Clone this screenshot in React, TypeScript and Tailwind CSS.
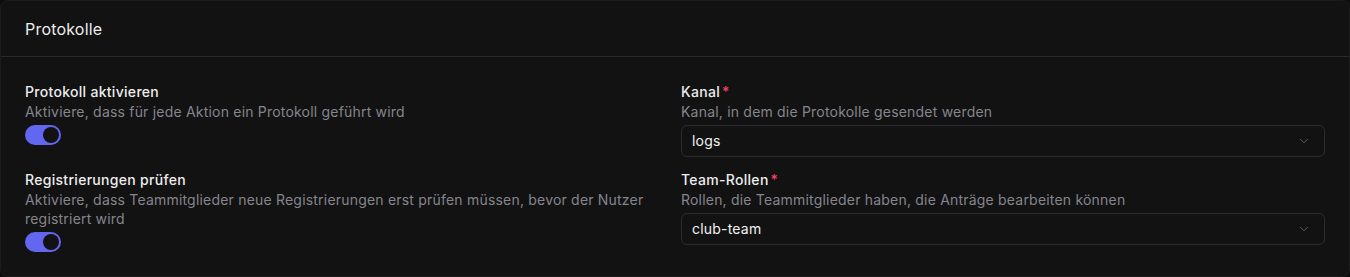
import { ChevronDown } from "lucide-react";

interface ToggleRow {
  title: string;
  description: string;
  enabled: boolean;
}

interface SelectRow {
  title: string;
  description: string;
  value: string;
}

const toggles: ToggleRow[] = [
  {
    title: "Protokoll aktivieren",
    description: "Aktiviere, dass für jede Aktion ein Protokoll geführt wird",
    enabled: true,
  },
  {
    title: "Registrierungen prüfen",
    description:
      "Aktiviere, dass Teammitglieder neue Registrierungen erst prüfen müssen, bevor der Nutzer registriert wird",
    enabled: true,
  },
];

const selects: SelectRow[] = [
  {
    title: "Kanal",
    description: "Kanal, in dem die Protokolle gesendet werden",
    value: "logs",
  },
  {
    title: "Team-Rollen",
    description: "Rollen, die Teammitglieder haben, die Anträge bearbeiten können",
    value: "club-team",
  },
];

function Switch({ on }: { on: boolean }) {
  return (
    <button
      type="button"
      className={
        on
          ? "flex h-5 w-9 items-center justify-end rounded-full bg-[#6366f1] px-[2px]"
          : "flex h-5 w-9 items-center justify-start rounded-full bg-[#3f3f46] px-[2px]"
      }
    >
      <span className="size-4 rounded-full bg-[#121212]" />
    </button>
  );
}

function ToggleField({ row }: { row: ToggleRow }) {
  return (
    <div className="flex flex-col">
      <span className="text-sm leading-5 font-medium tracking-[0.3px] text-[#ededed]">
        {row.title}
      </span>
      <span className="text-sm leading-[19px] tracking-[0.2px] text-[#85858d]">
        {row.description}
      </span>
      <div className="mt-[4px]">
        <Switch on={row.enabled} />
      </div>
    </div>
  );
}

function SelectField({ row }: { row: SelectRow }) {
  return (
    <div className="flex flex-col">
      <span className="text-sm leading-5 font-medium tracking-[0.3px] text-[#ededed]">
        {row.title}
        <span className="ml-[2px] text-[#f43f5e]">*</span>
      </span>
      <span className="text-sm leading-5 tracking-[0.2px] text-[#85858d]">
        {row.description}
      </span>
      <div className="mt-[3px] flex h-8 items-center justify-between rounded-md border border-[#2c2c30] pr-[13px] pl-[10px]">
        <span className="text-sm tracking-[0.2px] text-[#f2f2f2]">{row.value}</span>
        <ChevronDown className="size-[14px] text-[#6b6b73]" strokeWidth={1.5} />
      </div>
    </div>
  );
}

export default function App() {
  return (
    <div
      className="h-[277px] w-[1350px] bg-[#0d0d0d]"
      style={{ fontFamily: "Inter, 'Noto Sans', sans-serif" }}
    >
      <div className="h-full rounded-lg border border-[#1c1c1c] bg-[#121212]">
        <div className="flex h-[56px] items-center border-b border-[#2a2a2c] px-6">
          <h2 className="text-base tracking-[0.2px] text-[#ececec]">Protokolle</h2>
        </div>
        <div className="grid grid-cols-2 gap-x-3 gap-y-[13px] px-6 pt-[25px]">
          <ToggleField row={toggles[0]} />
          <SelectField row={selects[0]} />
          <ToggleField row={toggles[1]} />
          <SelectField row={selects[1]} />
        </div>
      </div>
    </div>
  );
}
